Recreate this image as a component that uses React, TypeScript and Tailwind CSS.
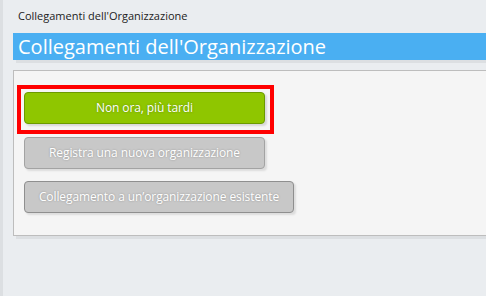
import * as React from "react"

export default function App() {
  return (
    <div
      className="flex h-[296px] w-[486px] overflow-hidden bg-[#eaedf0]"
      style={{ fontFamily: "'Open Sans', 'Liberation Sans', sans-serif" }}
    >
      {/* left rail */}
      <div className="w-[3px] shrink-0 bg-[#dcdfe2]" />

      <div className="flex flex-1 flex-col pl-[10px]">
        {/* breadcrumb title */}
        <div className="h-[33px] pl-[5px] pt-[8px] text-[11px] leading-[16px] text-[#222]">
          Collegamenti dell'Organizzazione
        </div>

        {/* blue heading bar */}
        <div className="h-[27px] bg-[#4aaff2] pl-[5px] text-[20px] leading-[27px] text-white shadow-[3px_3px_0_#dcdfe2]">
          Collegamenti dell'Organizzazione
        </div>

        {/* content panel */}
        <div className="mt-[10px] h-[166px] border-t border-b border-l border-[#bdbdbd] bg-[#f5f5f5] pl-[3px] pt-[14px] shadow-[3px_3px_0_#dcdfe2]">
          <div className="w-[257px] border-[4px] border-[#ff0000] pb-[6px] pl-[3px] pr-[5px] pt-[3px]">
            <button className="h-[32px] w-[241px] rounded-[4px] border border-[#6b9a00] bg-[#8fc600] text-[12px] tracking-[-0.1px] text-white shadow-[2px_2px_2px_rgba(0,0,0,0.12)] [text-shadow:0_0_2px_rgba(40,80,0,0.5)]">
              Non ora, più tardi
            </button>
          </div>

          <div className="flex flex-col items-start gap-[12px] pl-[7px] pt-[3px]">
            <button className="h-[32px] w-[241px] rounded-[4px] border border-[#a3a3a3] bg-[#c8c8c8] text-[12px] tracking-[-0.1px] text-white shadow-[2px_2px_2px_rgba(0,0,0,0.1)] [text-shadow:0_0_2px_rgba(0,0,0,0.3)]">
              Registra una nuova organizzazione
            </button>
            <button className="h-[32px] w-[270px] rounded-[4px] border border-[#8f8f8f] bg-[#c8c8c8] text-[12px] tracking-[-0.1px] text-white shadow-[2px_2px_2px_rgba(0,0,0,0.1)] [text-shadow:0_0_2px_rgba(0,0,0,0.3)]">
              Collegamento a un’organizzazione esistente
            </button>
          </div>
        </div>
      </div>
    </div>
  )
}
